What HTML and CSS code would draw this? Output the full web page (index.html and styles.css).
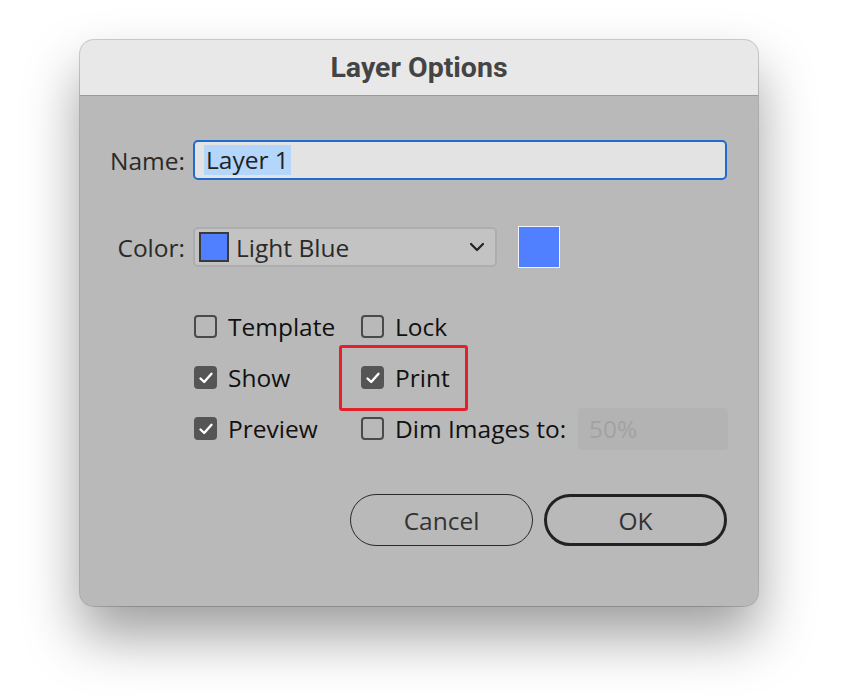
FILE: index.html
```html
<!DOCTYPE html>
<html>
<head>
<meta charset="utf-8">
<link rel="stylesheet" href="styles.css">
</head>
<body>
<div class="dialog">
  <div class="titlebar">Layer Options</div>
  <div class="content">
    <div class="form">
      <label class="label">Name:</label>
      <div class="textfield"><span class="selected">Layer 1</span></div>
      <label class="label label-color">Color:</label>
      <div class="color-row">
        <div class="select">
          <span class="swatch-small"></span>
          <span class="select-text">Light Blue</span>
          <svg class="chevron" width="16" height="10" viewBox="0 0 16 10"><path d="M2 2 L8 8 L14 2" fill="none" stroke="#222" stroke-width="2.2" stroke-linecap="round" stroke-linejoin="round"/></svg>
        </div>
        <div class="swatch-big"></div>
      </div>
    </div>
    <div class="checks">
      <div class="check"><span class="box"></span><span>Template</span></div>
      <div class="check"><span class="box"></span><span>Lock</span></div>
      <div class="check"><span class="box checked"><svg width="16" height="14" viewBox="0 0 16 14"><path d="M2.5 7.5 L6.2 11 L13.5 2.8" fill="none" stroke="#fff" stroke-width="2.4" stroke-linecap="round" stroke-linejoin="round"/></svg></span><span>Show</span></div>
      <div class="check print"><span class="box checked"><svg width="16" height="14" viewBox="0 0 16 14"><path d="M2.5 7.5 L6.2 11 L13.5 2.8" fill="none" stroke="#fff" stroke-width="2.4" stroke-linecap="round" stroke-linejoin="round"/></svg></span><span>Print</span><span class="highlight"></span></div>
      <div class="check"><span class="box checked"><svg width="16" height="14" viewBox="0 0 16 14"><path d="M2.5 7.5 L6.2 11 L13.5 2.8" fill="none" stroke="#fff" stroke-width="2.4" stroke-linecap="round" stroke-linejoin="round"/></svg></span><span>Preview</span></div>
      <div class="check dim"><span class="box"></span><span>Dim Images to:</span><div class="dimfield">50%</div></div>
    </div>
    <div class="buttons">
      <button class="btn">Cancel</button>
      <button class="btn btn-default">OK</button>
    </div>
  </div>
</div>
</body>
</html>
```
FILE: styles.css
```css
html, body {
  margin: 0;
  background: #ffffff;
}
body {
  min-height: 700px;
  box-sizing: border-box;
  padding: 40px 0 0 80px;
  font-family: "Open Sans", "DejaVu Sans", sans-serif;
  color: #1a1a1a;
}
.dialog {
  width: 678px;
  height: 566px;
  border-radius: 14px;
  background: #b9b9b9;
  overflow: hidden;
  box-shadow: 0 0 0 1px rgba(0,0,0,0.18), 0 30px 55px rgba(0,0,0,0.38);
  display: flex;
  flex-direction: column;
}
.titlebar {
  height: 56px;
  background: #e8e8e8;
  border-bottom: 1px solid #9a9a9a;
  display: flex;
  align-items: center;
  justify-content: center;
  font-family: Roboto, "Liberation Sans", sans-serif;
  font-weight: 700;
  font-size: 28.5px;
  color: #444;
  box-sizing: border-box;
}
.content {
  padding: 44px 31px 0 0;
}
.form {
  display: grid;
  grid-template-columns: 105px 1fr;
  column-gap: 8px;
  row-gap: 46px;
  align-items: center;
}
.label {
  text-align: right;
  font-size: 24.5px;
  color: #2a2a2a;
}
.textfield {
  height: 40px;
  box-sizing: border-box;
  border: 2px solid #1f6bd1;
  border-radius: 5px;
  background: #e3e3e3;
  display: flex;
  align-items: center;
  padding-left: 9px;
  font-size: 24.5px;
  color: #222;
}
.selected {
  background: #b4d6fb;
  padding: 0 2px 0 2px;
  line-height: 30px;
}
.color-row {
  display: flex;
  align-items: center;
  gap: 21px;
}
.select {
  width: 304px;
  height: 40px;
  box-sizing: border-box;
  border: 2px solid #adadad;
  border-radius: 5px;
  background: #c3c3c3;
  display: flex;
  align-items: center;
  padding: 0 10px 0 4px;
  font-size: 24.5px;
  color: #2a2a2a;
}
.swatch-small {
  width: 30px;
  height: 30px;
  box-sizing: border-box;
  background: #5080ff;
  border: 2px solid #3a3a3a;
  margin-right: 7px;
}
.select-text {
  flex: 1;
}
.chevron {
  display: block;
}
.swatch-big {
  width: 42px;
  height: 42px;
  box-sizing: border-box;
  background: #5080ff;
  border: 1px solid #f4f4f4;
}
.checks {
  margin: 33px 0 0 114px;
  display: grid;
  grid-template-columns: 167px 1fr;
  grid-auto-rows: 51px;
  align-items: center;
  font-size: 24.5px;
  color: #111;
}
.check {
  display: flex;
  align-items: center;
  gap: 11px;
  position: relative;
}
.box {
  flex: none;
  width: 23px;
  height: 23px;
  box-sizing: border-box;
  border: 2px solid #4a4a4a;
  border-radius: 4px;
  display: flex;
  align-items: center;
  justify-content: center;
}
.box.checked {
  background: #555;
  border-color: #555;
}
.highlight {
  position: absolute;
  left: -22px;
  top: -16px;
  width: 129px;
  height: 66px;
  box-sizing: border-box;
  border: 3px solid #e3202b;
  border-radius: 3px;
}
.dimfield {
  margin-left: auto;
  margin-right: -1px;
  width: 150px;
  height: 42px;
  box-sizing: border-box;
  background: #b3b3b3;
  border-radius: 4px;
  color: #a2a2a2;
  display: flex;
  align-items: center;
  padding-left: 11px;
}
.buttons {
  margin-top: 40px;
  display: flex;
  justify-content: flex-end;
  gap: 11px;
}
.btn {
  width: 183px;
  height: 52px;
  border-radius: 26px;
  border: 1.5px solid #2a2a2a;
  background: transparent;
  font-family: "Open Sans", "DejaVu Sans", sans-serif;
  font-size: 24.5px;
  color: #333;
}
.btn-default {
  border: 3px solid #222;
}
```
